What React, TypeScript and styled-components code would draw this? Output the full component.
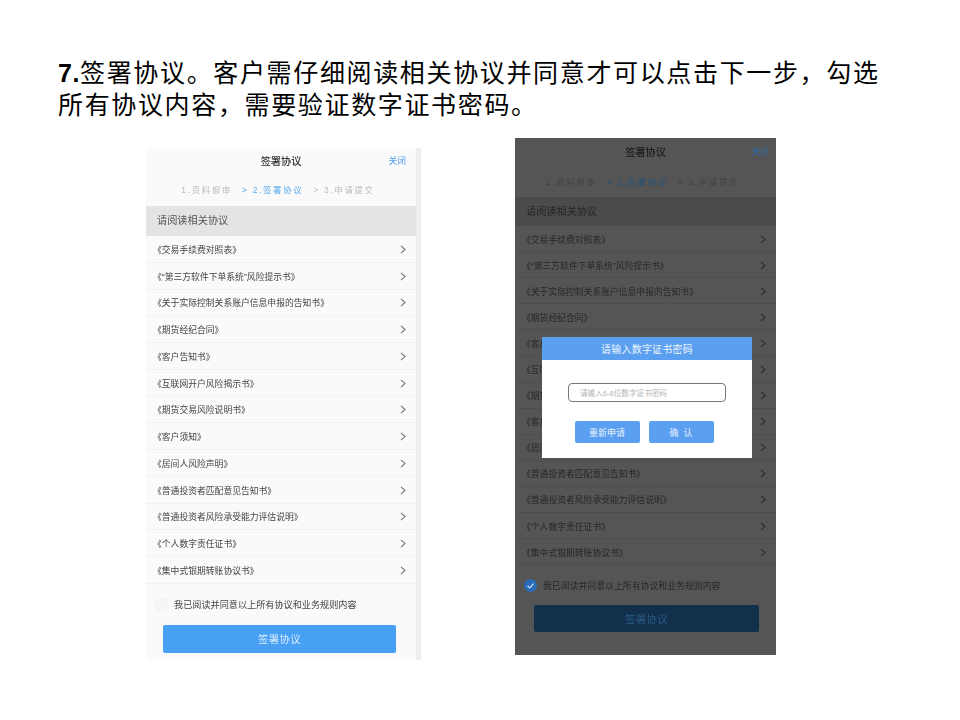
import React from "react";
import styled, { createGlobalStyle, css } from "styled-components";

const GlobalStyle = createGlobalStyle`
  html, body {
    margin: 0;
    padding: 0;
    background: #fff;
  }
  * {
    box-sizing: border-box;
  }
`;

const lightPalette = css`
  --bg: #fafafa;
  --title: #333;
  --link: #4f9fee;
  --step: #bcbcbc;
  --step-active: #5aa9ec;
  --band: #e4e4e4;
  --band-text: #555;
  --text: #444;
  --line: #f1f1f1;
  --chevron: #777;
  --button: #48a0f5;
  --button-text: #d9ecfd;
`;

// the same screen behind the dialog's dimmed backdrop
const dimmedPalette = css`
  --bg: #555;
  --title: #1c1c1c;
  --link: #2f6aa6;
  --step: #424242;
  --step-active: #25527c;
  --band: #4b4b4b;
  --band-text: #262626;
  --text: #272727;
  --line: #4e4e4e;
  --chevron: #2c2c2c;
  --button: #12304c;
  --button-text: #2a5a82;
`;

const Slide = styled.div`
  width: 960px;
  height: 720px;
  overflow: hidden;
  background: #fff;
  font-family: "Liberation Sans", "Noto Sans CJK SC", sans-serif;
`;

const Heading = styled.h1`
  margin: 0;
  padding: 57px 0 0 58px;
  font-size: 25px;
  font-weight: 400;
  line-height: 32px;
  letter-spacing: 1.65px;
  color: #000;
`;

const StepNumber = styled.span`
  font-weight: 700;
  letter-spacing: 0.6px;
`;

const Screens = styled.div`
  display: flex;
  align-items: flex-start;
  padding-left: 146px;
  gap: 94px;
`;

const Phone = styled.div<{ $width: number; $top: number; $height: number; $dimmed?: boolean }>`
  ${(p) => (p.$dimmed ? dimmedPalette : lightPalette)}
  position: relative;
  flex: none;
  width: ${(p) => p.$width}px;
  height: ${(p) => p.$height}px;
  margin-top: ${(p) => p.$top}px;
  background: var(--bg);
  display: flex;
`;

const Content = styled.div`
  flex: 1;
  min-width: 0;
  display: flex;
  flex-direction: column;
  filter: blur(0.45px);
`;

const RightStrip = styled.div`
  width: 5px;
  background: #eeeeee;
`;

const TitleBar = styled.div<{ $h: number; $closeRight: number }>`
  height: ${(p) => p.$h}px;
  flex: none;
  position: relative;
  display: flex;
  align-items: center;
  justify-content: center;
  font-size: 10.2px;
  font-weight: 500;
  color: var(--title);

  span {
    right: ${(p) => p.$closeRight}px;
  }
`;

const CloseLink = styled.span`
  position: absolute;
  font-size: 8.8px;
  font-weight: 400;
  color: var(--link);
`;

const Steps = styled.div<{ $h: number }>`
  height: ${(p) => p.$h}px;
  flex: none;
  display: flex;
  align-items: center;
  justify-content: center;
  gap: 10px;
  padding-right: 6px;
  font-size: 8.4px;
  letter-spacing: 1.7px;
`;

const Step = styled.span<{ $active?: boolean }>`
  color: ${(p) => (p.$active ? "var(--step-active)" : "var(--step)")};
`;

const SectionBand = styled.div<{ $h: number }>`
  height: ${(p) => p.$h}px;
  flex: none;
  display: flex;
  align-items: center;
  padding: 0 0 3px 11px;
  background: var(--band);
  font-size: 10.2px;
  color: var(--band-text);
`;

const Row = styled.div<{ $h: number }>`
  height: ${(p) => p.$h}px;
  flex: none;
  display: flex;
  align-items: center;
  justify-content: space-between;
  padding: 1px 10px 0 7px;
  border-bottom: 1px solid var(--line);
  font-size: 8.8px;
  color: var(--text);
`;

const Chevron = styled.svg`
  width: 6px;
  height: 9px;
  flex: none;
  fill: none;
  stroke: var(--chevron);
  stroke-width: 1.1;
`;

const AgreeRow = styled.div<{ $h: number; $size: number }>`
  height: ${(p) => p.$h}px;
  flex: none;
  display: flex;
  align-items: center;
  gap: 6px;
  padding-left: 9px;
  font-size: ${(p) => p.$size}px;
  color: var(--text);
`;

const RadioEmpty = styled.span`
  width: 13px;
  height: 13px;
  border-radius: 50%;
  background: #f6f6f6;
  border: 1px solid #f0f0f0;
`;

const CheckedIcon = styled.svg`
  width: 13px;
  height: 13px;
  flex: none;
`;

const SignButton = styled.div<{ $h: number; $left: number; $right: number }>`
  height: ${(p) => p.$h}px;
  margin: 0 ${(p) => p.$right}px 0 ${(p) => p.$left}px;
  flex: none;
  display: flex;
  align-items: center;
  justify-content: center;
  border-radius: 2px;
  background: var(--button);
  font-size: 10.4px;
  letter-spacing: 0.4px;
  color: var(--button-text);
`;

const Dialog = styled.div`
  position: absolute;
  left: 27px;
  top: 199px;
  width: 210px;
  height: 121px;
  background: #fff;
  display: flex;
  flex-direction: column;
  align-items: center;
`;

const DialogTitle = styled.div`
  width: 100%;
  height: 23px;
  display: flex;
  align-items: center;
  justify-content: center;
  background: #5b9ff0;
  color: #eef5fe;
  font-size: 10px;
  letter-spacing: 0.2px;
`;

const PasswordInput = styled.div`
  width: 158px;
  height: 19px;
  margin-top: 23px;
  padding-left: 11px;
  display: flex;
  align-items: center;
  border: 1px solid #777;
  border-radius: 4px;
  color: #b5b5b5;
  font-size: 7.6px;
`;

const DialogActions = styled.div`
  display: flex;
  gap: 9px;
  margin: 19px 6px 0 0;
`;

const DialogButton = styled.div`
  width: 65px;
  height: 22px;
  display: flex;
  align-items: center;
  justify-content: center;
  border-radius: 2px;
  background: #5b9ff0;
  color: #e8f2fd;
  font-size: 9px;
  white-space: pre;
`;

const agreements = [
  "《交易手续费对照表》",
  "《“第三方软件下单系统”风险提示书》",
  "《关于实际控制关系账户信息申报的告知书》",
  "《期货经纪合同》",
  "《客户告知书》",
  "《互联网开户风险揭示书》",
  "《期货交易风险说明书》",
  "《客户须知》",
  "《居间人风险声明》",
  "《普通投资者匹配意见告知书》",
  "《普通投资者风险承受能力评估说明》",
  "《个人数字责任证书》",
  "《集中式银期转账协议书》",
];

type ScreenProps = {
  titleH: number;
  closeRight: number;
  stepsH: number;
  bandH: number;
  rowH: number;
  agreeH: number;
  agreeSize: number;
  buttonH: number;
  buttonLeft: number;
  buttonRight: number;
  checked?: boolean;
};

const SignScreen = ({
  titleH,
  closeRight,
  stepsH,
  bandH,
  rowH,
  agreeH,
  agreeSize,
  buttonH,
  buttonLeft,
  buttonRight,
  checked,
}: ScreenProps) => (
  <Content>
    <TitleBar $h={titleH} $closeRight={closeRight}>
      签署协议
      <CloseLink>关闭</CloseLink>
    </TitleBar>
    <Steps $h={stepsH}>
      <Step>1.资料报审</Step>
      <Step $active>&gt; 2.签署协议</Step>
      <Step>&gt; 3.申请提交</Step>
    </Steps>
    <SectionBand $h={bandH}>请阅读相关协议</SectionBand>
    {agreements.map((name) => (
      <Row key={name} $h={rowH}>
        {name}
        <Chevron viewBox="0 0 6 9">
          <path d="M1 .8 5 4.5 1 8.2" />
        </Chevron>
      </Row>
    ))}
    <AgreeRow $h={agreeH} $size={agreeSize}>
      {checked ? (
        <CheckedIcon viewBox="0 0 13 13">
          <circle cx="6.5" cy="6.5" r="6.5" fill="#2a6bb8" />
          <path d="M3.5 6.8 5.8 9l3.8-4.4" fill="none" stroke="#c9dcf2" strokeWidth="1.2" />
        </CheckedIcon>
      ) : (
        <RadioEmpty />
      )}
      我已阅读并同意以上所有协议和业务规则内容
    </AgreeRow>
    <SignButton $h={buttonH} $left={buttonLeft} $right={buttonRight}>
      签署协议
    </SignButton>
  </Content>
);

export default function App() {
  return (
    <Slide>
      <GlobalStyle />
      <Heading>
        <StepNumber>7.</StepNumber>签署协议。客户需仔细阅读相关协议并同意才可以点击下一步，勾选
        <br />
        所有协议内容，需要验证数字证书密码。
      </Heading>
      <Screens>
        <Phone $width={275} $top={27} $height={512}>
          <SignScreen
            titleH={24}
            closeRight={10}
            stepsH={34}
            bandH={30}
            rowH={26.75}
            agreeH={41}
            agreeSize={9.15}
            buttonH={28}
            buttonLeft={17}
            buttonRight={20}
          />
          <RightStrip />
        </Phone>
        <Phone $width={261} $top={17} $height={517} $dimmed>
          <SignScreen
            titleH={26}
            closeRight={7}
            stepsH={33}
            bandH={29}
            rowH={26.1}
            agreeH={40}
            agreeSize={8.9}
            buttonH={27}
            buttonLeft={19}
            buttonRight={17}
            checked
          />
          <Dialog>
            <DialogTitle>请输入数字证书密码</DialogTitle>
            <PasswordInput>请输入6-8位数字证书密码</PasswordInput>
            <DialogActions>
              <DialogButton>重新申请</DialogButton>
              <DialogButton>确  认</DialogButton>
            </DialogActions>
          </Dialog>
        </Phone>
      </Screens>
    </Slide>
  );
}
